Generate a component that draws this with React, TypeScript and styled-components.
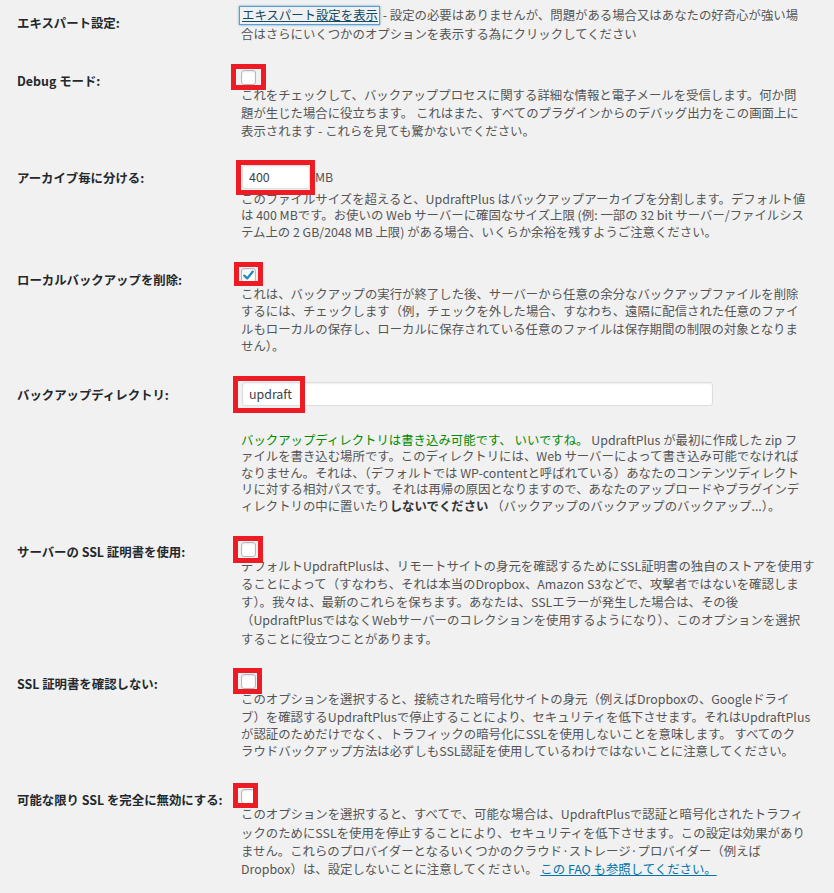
import React from "react";
import styled, { createGlobalStyle } from "styled-components";

const GlobalStyle = createGlobalStyle`
  html, body {
    margin: 0;
    padding: 0;
    background: #f1f1f1;
  }
  body {
    font-family: "Noto Sans CJK JP", "Noto Sans", sans-serif;
  }
`;

const Page = styled.div`
  min-height: 893px;
  box-sizing: border-box;
  padding: 6px 0 0 17px;
  background: #f1f1f1;
  color: #555;
  font-size: 12.4px;
`;

const Row = styled.div<{ $gap: number }>`
  display: grid;
  grid-template-columns: 224px 1fr;
  margin-top: ${(p) => p.$gap}px;
`;

const Label = styled.div<{ $offset: number }>`
  padding-top: ${(p) => p.$offset}px;
  font-weight: 700;
  color: #23282d;
  line-height: 18px;
  white-space: nowrap;
`;

const Field = styled.div`
  min-width: 0;
`;

const ControlLine = styled.div<{ $height: number }>`
  position: relative;
  display: flex;
  align-items: center;
  gap: 5px;
  height: ${(p) => p.$height}px;
`;

/* red frame drawn over a control */
const Highlight = styled.span<{ $x: number; $y: number; $w: number; $h: number }>`
  position: absolute;
  left: ${(p) => p.$x}px;
  top: ${(p) => p.$y}px;
  width: ${(p) => p.$w}px;
  height: ${(p) => p.$h}px;
  box-sizing: border-box;
  border: 5px solid #ed1c24;
  pointer-events: none;
  z-index: 2;
`;

const Checkbox = styled.span`
  display: inline-flex;
  align-items: center;
  justify-content: center;
  align-self: flex-start;
  width: 15px;
  height: 15px;
  box-sizing: border-box;
  border: 1px solid #b4b9be;
  border-radius: 3px;
  background: #fff;
  box-shadow: inset 0 1px 2px rgba(0, 0, 0, 0.1);
`;

const TextInput = styled.input<{ $width: number }>`
  width: ${(p) => p.$width}px;
  height: 24px;
  margin: 0 0 0 1px;
  box-sizing: border-box;
  padding: 0 6px;
  border: 1px solid #ddd;
  border-radius: 3px;
  background: #fff;
  box-shadow: inset 0 1px 2px rgba(0, 0, 0, 0.07);
  color: #3c4146;
  font-family: inherit;
  font-weight: 400;
  font-size: 12.4px;
  outline: none;
`;

const Unit = styled.span`
  color: #555;
  line-height: 24px;
`;

const Desc = styled.div<{ $lh: number; $mt?: number }>`
  line-height: ${(p) => p.$lh}px;
  margin-top: ${(p) => p.$mt ?? 0}px;
`;

const Line = styled.span`
  display: block;
  white-space: nowrap;
`;

const FocusButton = styled.span`
  display: inline-block;
  margin-left: -2px;
  padding: 0 1px 0 2px;
  border: 1px solid #5b9dd9;
  box-shadow: 0 0 2px rgba(30, 140, 190, 0.8);
  color: #124964;
  text-decoration: underline;
  line-height: 17px;
`;

const Good = styled.span`
  color: #008a00;
`;

const Strong = styled.strong`
  color: #333;
  font-weight: 700;
`;

const Link = styled.a`
  color: #0073aa;
  text-decoration: underline;
`;

const Check = ({ checked }: { checked?: boolean }) => (
  <Checkbox>
    {checked && (
      <svg width="13" height="13" viewBox="0 0 13 13" aria-hidden="true">
        <path
          d="M2.3 6.6 L5.2 9.4 L10.8 2.6"
          fill="none"
          stroke="#1e8cbe"
          strokeWidth="2.3"
          strokeLinecap="round"
          strokeLinejoin="round"
        />
      </svg>
    )}
  </Checkbox>
);

export default function App() {
  return (
    <>
      <GlobalStyle />
      <Page>
        <Row $gap={0}>
          <Label $offset={8}>エキスパート設定:</Label>
          <Field>
            <Desc $lh={18}>
              <Line>
                <FocusButton>エキスパート設定を表示</FocusButton> - 設定の必要はありませんが、問題がある場合又はあなたの好奇心が強い場
              </Line>
              <Line>合はさらにいくつかのオプションを表示する為にクリックしてください</Line>
            </Desc>
          </Field>
        </Row>

        <Row $gap={27}>
          <Label $offset={2}>Debug モード:</Label>
          <Field>
            <ControlLine $height={16}>
              <Check />
              <Highlight $x={-10} $y={-6} $w={35} $h={26} />
            </ControlLine>
            <Desc $lh={18}>
              <Line>これをチェックして、バックアッププロセスに関する詳細な情報と電子メールを受信します。何か問</Line>
              <Line>題が生じた場合に役立ちます。 これはまた、すべてのプラグインからのデバッグ出力をこの画面上に</Line>
              <Line>表示されます - これらを見ても驚かないでください。</Line>
            </Desc>
          </Field>
        </Row>

        <Row $gap={25}>
          <Label $offset={4}>アーカイブ毎に分ける:</Label>
          <Field>
            <ControlLine $height={24}>
              <TextInput $width={68} readOnly value="400" />
              <Unit>MB</Unit>
              <Highlight $x={-5} $y={-5} $w={79} $h={35} />
            </ControlLine>
            <Desc $lh={16.5} $mt={1.5}>
              <Line>このファイルサイズを超えると、UpdraftPlus はバックアップアーカイブを分割します。デフォルト値</Line>
              <Line>は 400 MBです。お使いの Web サーバーに確固なサイズ上限 (例: 一部の 32 bit サーバー/ファイルシス</Line>
              <Line>テム上の 2 GB/2048 MB 上限) がある場合、いくらか余裕を残すようご注意ください。</Line>
            </Desc>
          </Field>
        </Row>

        <Row $gap={27.5}>
          <Label $offset={3}>ローカルバックアップを削除:</Label>
          <Field>
            <ControlLine $height={18}>
              <Check checked />
              <Highlight $x={-7} $y={-6} $w={29} $h={24} />
            </ControlLine>
            <Desc $lh={17.5}>
              <Line>これは、バックアップの実行が終了した後、サーバーから任意の余分なバックアップファイルを削除</Line>
              <Line>するには、チェックします（例，チェックを外した場合、すなわち、遠隔に配信された任意のファイ</Line>
              <Line>ルもローカルの保存し、ローカルに保存されている任意のファイルは保存期間の制限の対象となりま</Line>
              <Line>せん）。</Line>
            </Desc>
          </Field>
        </Row>

        <Row $gap={26}>
          <Label $offset={4}>バックアップディレクトリ:</Label>
          <Field>
            <ControlLine $height={24}>
              <TextInput $width={471} readOnly value="updraft" />
              <Highlight $x={-8} $y={-6} $w={72} $h={37} />
            </ControlLine>
            <Desc $lh={16.5} $mt={26}>
              <Line>
                <Good>バックアップディレクトリは書き込み可能です、 いいですね。</Good> UpdraftPlus が最初に作成した zip フ
              </Line>
              <Line>ァイルを書き込む場所です。このディレクトリには、Web サーバーによって書き込み可能でなければ</Line>
              <Line>なりません。それは、（デフォルトでは WP-contentと呼ばれている）あなたのコンテンツディレクト</Line>
              <Line>リに対する相対パスです。 それは再帰の原因となりますので、あなたのアップロードやプラグインデ</Line>
              <Line>
                ィレクトリの中に置いたり<Strong>しないでください</Strong> （バックアップのバックアップのバックアップ...）。
              </Line>
            </Desc>
          </Field>
        </Row>

        <Row $gap={27.5}>
          <Label $offset={1}>サーバーの SSL 証明書を使用:</Label>
          <Field>
            <ControlLine $height={15}>
              <Check />
              <Highlight $x={-8} $y={-6} $w={30} $h={27} />
            </ControlLine>
            <Desc $lh={18.3}>
              <Line>デフォルトUpdraftPlusは、リモートサイトの身元を確認するためにSSL証明書の独自のストアを使用す</Line>
              <Line>ることによって（すなわち、それは本当のDropbox、Amazon S3などで、攻撃者ではないを確認しま</Line>
              <Line>す）。我々は、最新のこれらを保ちます。あなたは、SSLエラーが発生した場合は、その後</Line>
              <Line>（UpdraftPlusではなくWebサーバーのコレクションを使用するようになり）、このオプションを選択</Line>
              <Line>することに役立つことがあります。</Line>
            </Desc>
          </Field>
        </Row>

        <Row $gap={26.5}>
          <Label $offset={1}>SSL 証明書を確認しない:</Label>
          <Field>
            <ControlLine $height={15}>
              <Check />
              <Highlight $x={-8} $y={-6} $w={29} $h={26} />
            </ControlLine>
            <Desc $lh={17.2} $mt={2}>
              <Line>このオプションを選択すると、接続された暗号化サイトの身元（例えばDropboxの、Googleドライ</Line>
              <Line>ブ）を確認するUpdraftPlusで停止することにより、セキュリティを低下させます。それはUpdraftPlus</Line>
              <Line>が認証のためだけでなく、トラフィックの暗号化にSSLを使用しないことを意味します。 すべてのク</Line>
              <Line>ラウドバックアップ方法は必ずしもSSL認証を使用しているわけではないことに注意してください。</Line>
            </Desc>
          </Field>
        </Row>

        <Row $gap={29}>
          <Label $offset={2}>可能な限り SSL を完全に無効にする:</Label>
          <Field>
            <ControlLine $height={15}>
              <Check />
              <Highlight $x={-8} $y={-6} $w={25} $h={25} />
            </ControlLine>
            <Desc $lh={18.3} $mt={1}>
              <Line>このオプションを選択すると、すべてで、可能な場合は、UpdraftPlusで認証と暗号化されたトラフィ</Line>
              <Line>ックのためにSSLを使用を停止することにより、セキュリティを低下させます。この設定は効果があり</Line>
              <Line>ません。これらのプロバイダーとなるいくつかのクラウド·ストレージ·プロバイダー（例えば</Line>
              <Line>
                Dropbox）は、設定しないことに注意してください。 <Link href="#">この FAQ も参照してください。</Link>
              </Line>
            </Desc>
          </Field>
        </Row>
      </Page>
    </>
  );
}
